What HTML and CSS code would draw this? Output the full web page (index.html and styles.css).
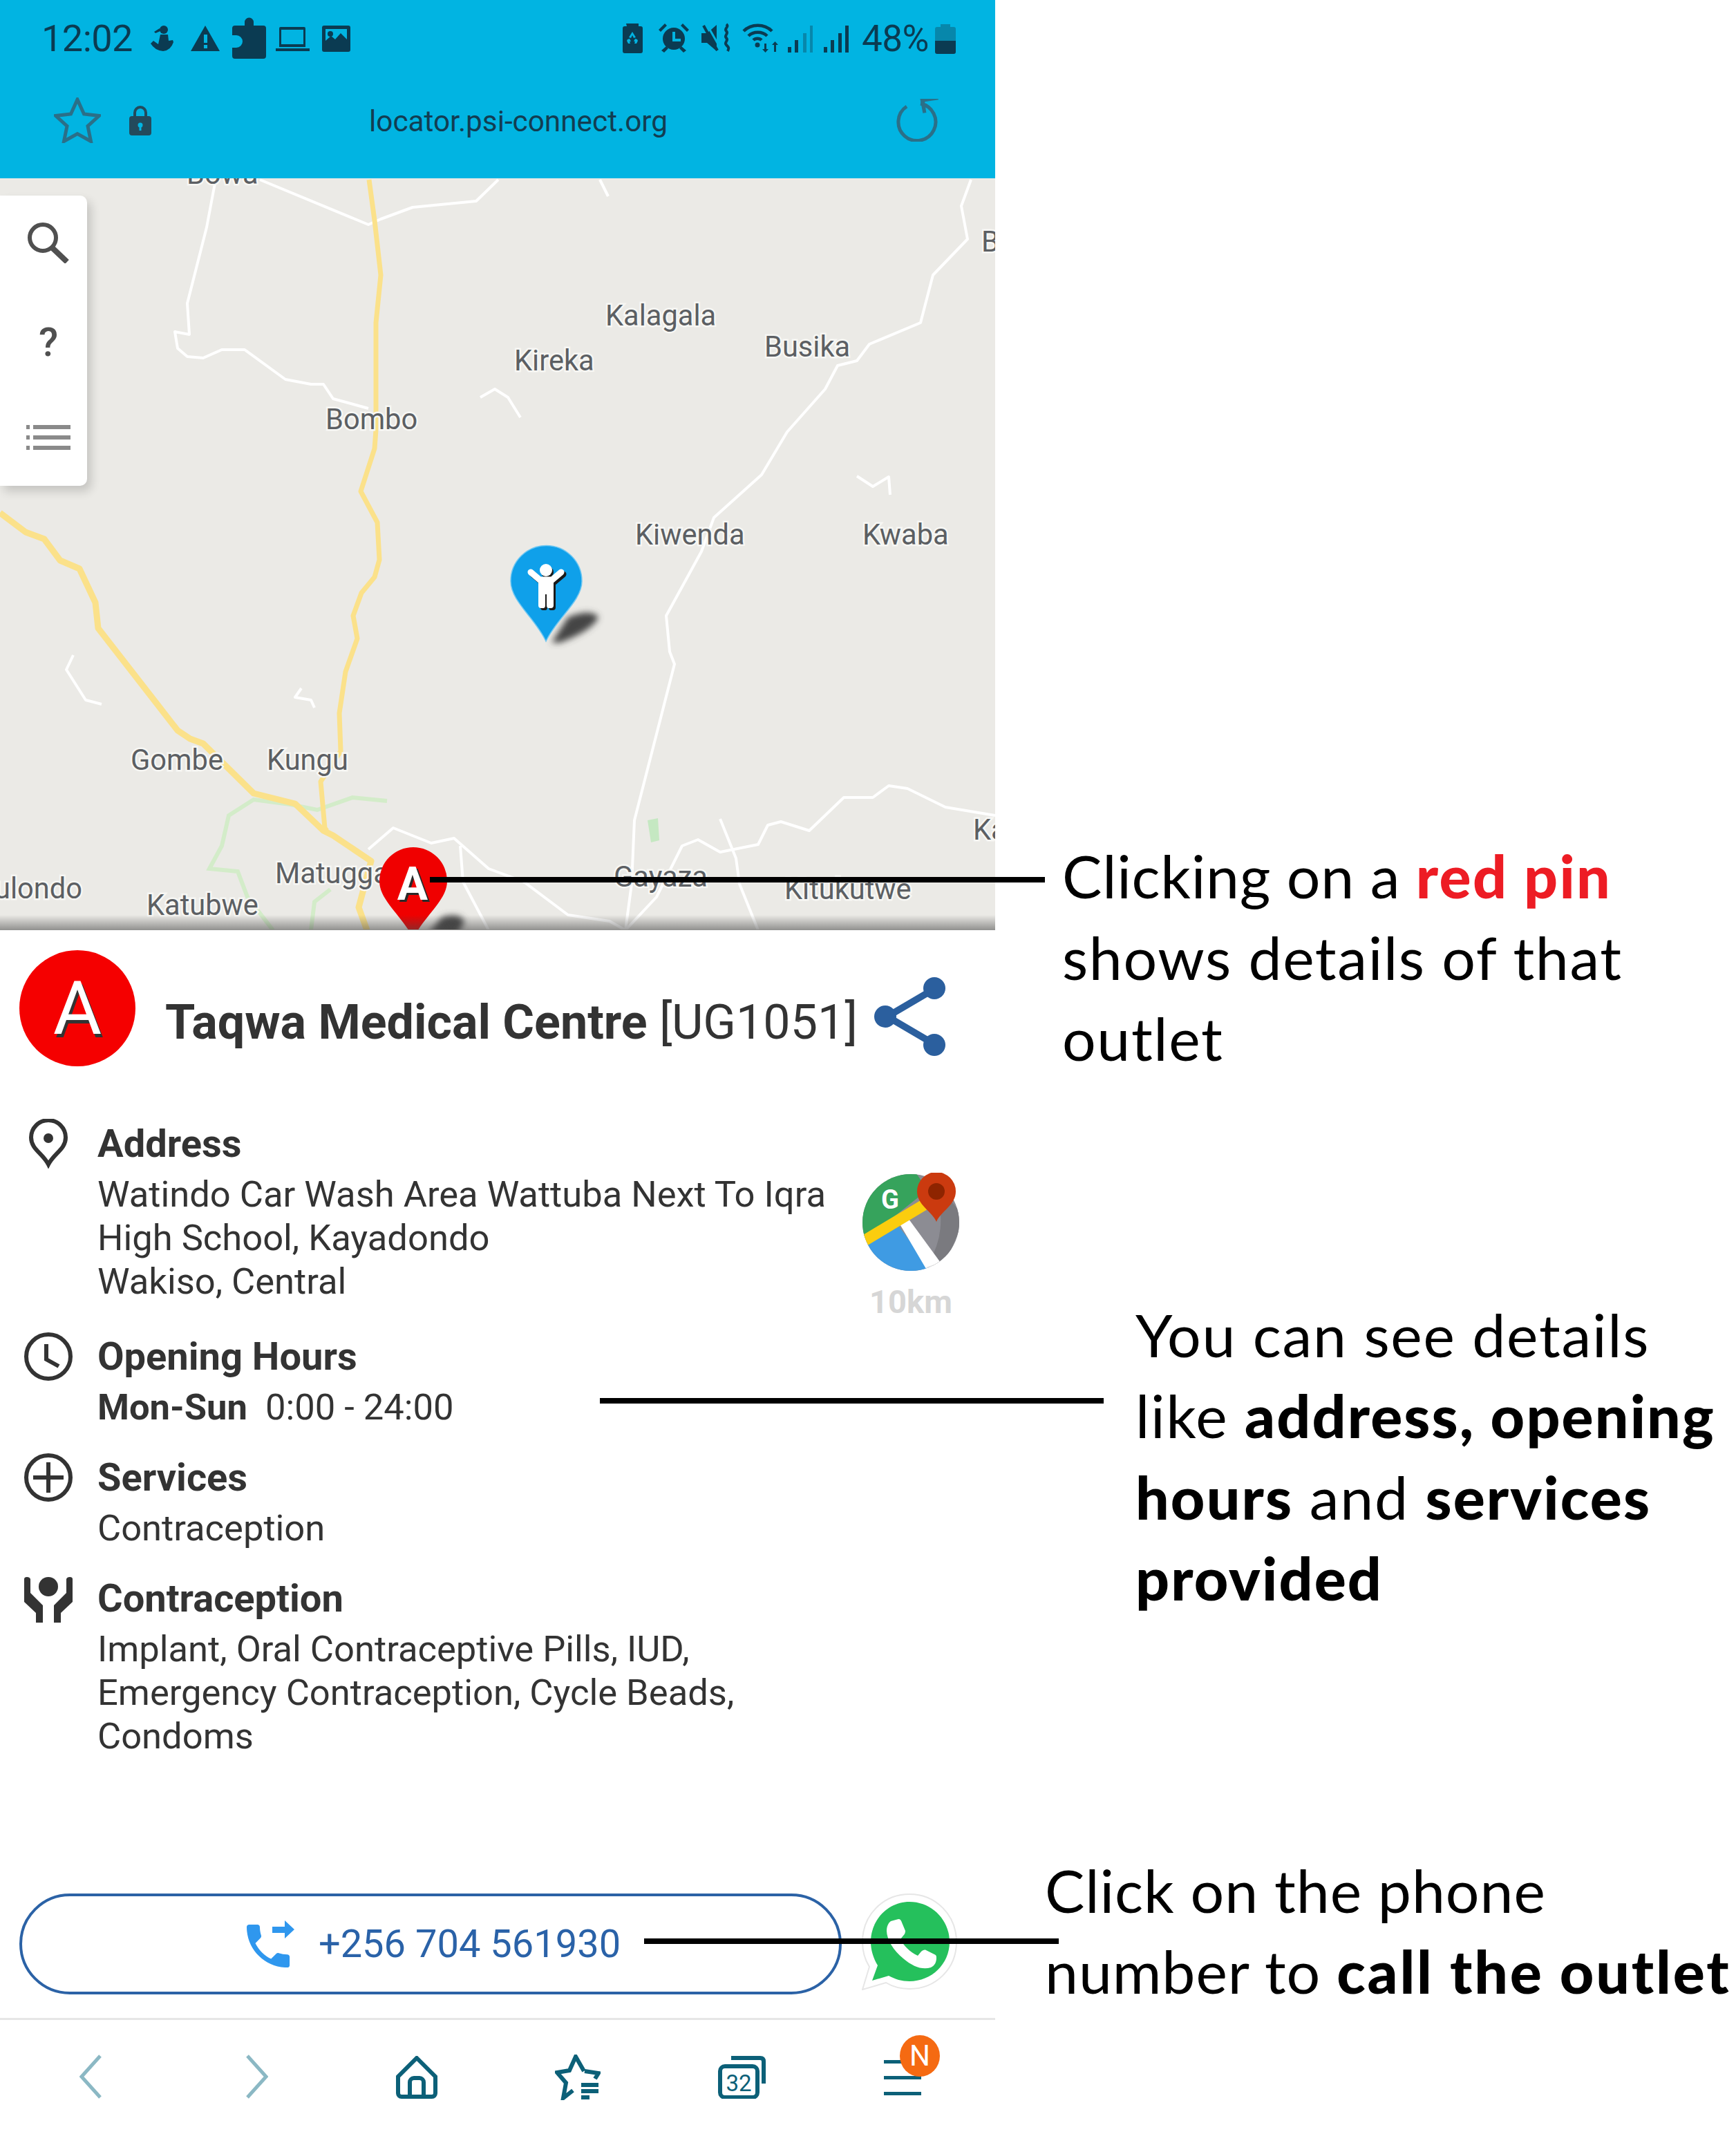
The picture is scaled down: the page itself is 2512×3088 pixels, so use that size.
FILE: index.html
```html
<!DOCTYPE html>
<html lang="en">
<head>
<meta charset="utf-8">
<title>Outlet locator</title>
<link rel="stylesheet" href="styles.css">
</head>
<body>
<main class="page">
  <section class="phone">
    <header class="browser-top">
      <div class="status">
        <span class="time">12:02</span>
        <svg class="st-left" viewBox="205 20 310 70" width="310" height="70">
          <g class="ink">
            <circle cx="237" cy="42" r="6"/>
            <path d="M231 40l-8 5 2 2 7-3zM232 49h11l1 9 6-1 1 3q-4 12-15 13-12-1-18-11l4-4 7 5z"/>
            <path d="M297 36l21 37h-42zM295 49v12h5V49zm0 15v5h5v-5z" fill-rule="evenodd"/>
            <path d="M354 36v-5a6.500 6.500 0 0 1 13 0v5h14a4 4 0 0 1 4 4v40a4 4 0 0 1-4 4h-41a4 4 0 0 1-4-4V68h6a9 9 0 0 0 0-18h-6V40a4 4 0 0 1 4-4z"/>
            <path d="M406 38h34a2 2 0 0 1 2 2v27h-38V40a2 2 0 0 1 2-2zm1 4v21h32V42zM399 69h49v4h-49z" fill-rule="evenodd"/>
            <path d="M469 36h35a3 3 0 0 1 3 3v32a3 3 0 0 1-3 3h-35a3 3 0 0 1-3-3V39a3 3 0 0 1 3-3zm2 5v17l8-7 6 5 8-9 9 9V41z" fill-rule="evenodd"/>
            <circle cx="478" cy="48" r="4"/>
          </g>
        </svg>
        <svg class="st-right" viewBox="895 20 340 70" width="340" height="70">
          <g class="ink">
            <path d="M906 33h18v4h3a3 3 0 0 1 3 3v33a3 3 0 0 1-3 3h-23a3 3 0 0 1-3-3V40a3 3 0 0 1 3-3h3z"/>
            <path class="hole" d="M915 45l5 8-3 1-2-4-2 4-3-1zM908 56l3-1 2 4h-2l1 3h-3l-2-4zM922 56l-3-1-2 4h2l-1 3h3l2-4z"/>
            <circle cx="975" cy="55" r="16"/>
            <path d="M953 42l9-9 3 3-9 9zM997 42l-9-9-3 3 9 9zM957 72l7-6 3 3-6 6zM993 72l-7-6-3 3 6 6z"/>
            <path class="hole" d="M973 45h4v10h8v4h-12z"/>
            <path d="M1015 47h8l14-12v38l-14-12h-8z"/>
            <path class="slash-gap" d="M1022 33l20 35"/>
            <path class="slash" d="M1018 36l20 36"/>
            <path class="wave" d="M1051 34c5 4-4 6 0 10s-4 6 0 10-4 6 0 10 4 5 2 9"/>
            <path class="arc" d="M1076 44c11-11 30-11 41 0M1083 51c7-7 20-7 27 0M1090 57c3-3 9-3 12 0"/>
            <circle cx="1096" cy="64" r="3.500"/>
            <path d="M1106 62h3v8h3l-4.500 5-4.500-5h3zM1123 74h-3v-10h-3l4.500-5 4.500 5h-3z"/>
            <path d="M1140 67h5v8h-5zM1150 57h5v18h-5z"/>
            <path class="faded" d="M1162 47h5v28h-5zM1172 36h4v39h-4z"/>
            <path d="M1192 67h5v8h-5zM1202 57h5v18h-5zM1213 47h5v28h-5zM1223 36h5v39h-5z"/>
          </g>
        </svg>
        <span class="pct">48%</span>
        <svg class="st-batt" viewBox="0 0 30 43" width="30" height="43">
          <path class="faded" d="M8 0h14v4h5a3 3 0 0 1 3 3v17H0V7a3 3 0 0 1 3-3h5z"/>
          <path class="ink" d="M0 24h30v16a3 3 0 0 1-3 3H3a3 3 0 0 1-3-3z"/>
        </svg>
      </div>
      <div class="urlbar">
        <svg class="u-star" viewBox="0 0 68 66" width="68" height="66">
          <path d="M34 3l9.500 21 22 2.500-16.500 15 4.500 22L34 52.500 14.500 63.500l4.500-22-16.500-15 22-2.500z"/>
        </svg>
        <svg class="u-lock" viewBox="0 0 32 44" width="32" height="44">
          <path d="M8 18v-7a8 8 0 0 1 16 0v7" fill="none" stroke="#234a5c" stroke-width="4"/>
          <rect y="16" width="32" height="28" rx="4" fill="#234a5c"/>
          <circle cx="16" cy="29" r="3.500" fill="#01b4e2"/>
          <rect x="14.500" y="29" width="3" height="8" fill="#01b4e2"/>
        </svg>
        <span class="url">locator.psi-connect.org</span>
        <svg class="u-reload" viewBox="0 0 64 62" width="64" height="62">
          <path d="M36 7a27 27 0 1 1-20 4" fill="none" stroke="#2b6f88" stroke-width="5"/>
          <path d="M36 0h26v5H42v16h-5z" fill="#2b6f88" transform="rotate(-8 36 4)"/>
        </svg>
      </div>
    </header>

    <section class="map">
      <svg class="map-art" viewBox="0 258 1440 1087" width="1440" height="1087">
        <defs>
          <filter id="soft" x="-40%" y="-40%" width="180%" height="180%"><feGaussianBlur stdDeviation="5"/></filter>
        </defs>
        <g class="green">
          <path d="M560 1159L510 1154 459 1172 420 1164 367 1157 331 1180 321 1224 303 1257 344 1261 358 1298 395 1346"/>
          <path d="M478 1287L455 1305 450 1346"/>
          <path d="M937 1187l15-3 2 32-12 3z" class="green-fill"/>
        </g>
        <g class="road-w">
          <path d="M312 260L299 329 271 439 274 484 253 480 257 504 271 516 294 518 321 506 354 506 413 549 450 556 468 556 482 577 533 591"/>
          <path d="M376 260L533 325 551 317 597 300 689 291 721 260"/>
          <path d="M868 260L880 284"/>
          <path d="M1405 260L1391 298 1400 346 1350 398 1332 467 1258 498 1240 522 1212 529 1194 563 1139 625 1102 687 1033 749 1015 798 964 891 969 943 976 961 918 1187 914 1279 905 1346"/>
          <path d="M695 575L716 563 735 575 753 604"/>
          <path d="M1240 689L1263 704 1286 690 1288 716"/>
          <path d="M106 948L96 969 124 1013 147 1019"/>
          <path d="M436 996L427 1009 450 1013 455 1024"/>
          <path d="M1440 1180L1368 1168 1313 1141 1286 1137 1263 1154 1221 1154 1171 1202 1130 1189 1111 1194 1097 1222 1042 1233 1010 1215 987 1224 950 1298 905 1346"/>
          <path d="M1042 1185L1065 1242 1070 1279 1097 1346"/>
          <path d="M533 1229L569 1198 624 1220 657 1213 707 1257 758 1276 822 1324 882 1333 905 1346"/>
          <path d="M666 1224L670 1276 707 1346"/>
        </g>
        <g class="road-y">
          <path d="M534 260L542 319 551 398 544 467 544 622 542 649 522 711 546 756 549 810 542 835 523 858 511 891 517 924 500 972 491 1032 493 1087 464 1131 470 1198 473 1202"/>
          <path class="wide" d="M0 742L37 770 64 780 87 811 115 823 138 872 142 909 257 1057 275 1069 294 1076 367 1148 427 1163 468 1202 482 1209 537 1246 519 1313 531 1346"/>
        </g>
        <g class="labels">
          <text x="270" y="266">Bowa</text>
          <text x="1420" y="364">B</text>
          <text x="876" y="471">Kalagala</text>
          <text x="744" y="536">Kireka</text>
          <text x="1106" y="516">Busika</text>
          <text x="471" y="621">Bombo</text>
          <text x="919" y="788">Kiwenda</text>
          <text x="1248" y="788">Kwaba</text>
          <text x="189" y="1114">Gombe</text>
          <text x="386" y="1114">Kungu</text>
          <text x="398" y="1278">Matugga</text>
          <text x="-8" y="1300">ulondo</text>
          <text x="212" y="1324">Katubwe</text>
          <text x="888" y="1283">Gayaza</text>
          <text x="1135" y="1301">Kitukutwe</text>
          <text x="1408" y="1215">Ka</text>
        </g>
        <path class="pin-shadow" d="M798 930L822 893Q855 880 866 893 858 912 810 930z" filter="url(#soft)"/>
        <path class="pin-blue" d="M790 928C775 895 739 870 739 841A51.500 51.500 0 1 1 842 841C842 870 805 895 790 928Z"/>
        <g class="person person-shade">
          <circle cx="792" cy="828" r="9"/>
          <path class="arm" d="M771 831l13 11h18l13-11"/>
          <path d="M782 841h22v38q0 4-4 4h-3q-3 0-3-4v-16h-2v16q0 4-3 4h-3q-4 0-4-4z"/>
        </g>
        <g class="person">
          <circle cx="790" cy="825" r="9"/>
          <path class="arm" d="M768 828l13 11h18l13-11"/>
          <path d="M779 838h22v38q0 4-4 4h-3q-3 0-3-4v-16h-2v16q0 4-3 4h-3q-4 0-4-4z"/>
        </g>
        <path class="pin-shadow" d="M620 1350L640 1327Q668 1320 672 1335L660 1355z" filter="url(#soft)"/>
        <path class="pin-red" d="M598 1358C582 1325 549 1303 549 1275A49 49 0 1 1 647 1275C647 1303 614 1325 598 1358Z"/>
        <text class="pin-letter shade" x="600" y="1305">A</text>
        <text class="pin-letter" x="597" y="1302">A</text>
      </svg>
      <div class="map-fade"></div>
      <nav class="tools">
        <svg viewBox="0 0 64 60" width="64" height="60"><circle cx="24" cy="23" r="19" fill="none" stroke="#505050" stroke-width="6"/><path d="M37 37l22 21" stroke="#505050" stroke-width="8"/></svg>
        <span class="tool-help">?</span>
        <svg viewBox="0 0 64 36" width="64" height="36"><path d="M0 0h5v6H0zM0 15h5v6H0zM0 30h5v6H0zM10 0h54v6H10zM10 15h54v6H10zM10 30h54v6H10z" fill="#8a8a8a"/></svg>
      </nav>
    </section>

    <section class="details">
      <div class="head">
        <div class="badge">A</div>
        <h1 class="title"><b>Taqwa Medical Centre</b> [UG1051]</h1>
        <svg class="share" viewBox="0 0 108 116" width="108" height="116">
          <path d="M88 18L20 58l68 40" fill="none" stroke="#2b5f9e" stroke-width="10"/>
          <circle cx="88" cy="17" r="16" fill="#2b5f9e"/><circle cx="17" cy="58" r="16" fill="#2b5f9e"/><circle cx="88" cy="99" r="16" fill="#2b5f9e"/>
        </svg>
      </div>

      <div class="row row-address">
        <svg class="ico" viewBox="0 0 72 72" width="72" height="72"><path class="ln" d="M36 66C28 50 11 44 11 27a25 25 0 0 1 50 0C61 44 44 50 36 66Z"/><circle class="fl" cx="36" cy="28" r="7"/></svg>
        <div class="col">
          <h2 class="label">Address</h2>
          <p class="body">Watindo Car Wash Area Wattuba Next To Iqra<br>High School, Kayadondo<br>Wakiso, Central</p>
        </div>
        <div class="route">
          <svg viewBox="1245 1695 142 144" width="142" height="144">
            <defs><clipPath id="disc"><circle cx="1316" cy="1767" r="70"/></clipPath></defs>
            <g clip-path="url(#disc)">
              <rect x="1240" y="1690" width="150" height="150" fill="#8c8c93"/>
              <path d="M1345 1700L1394 1760 1360 1840 1342 1825Q1375 1770 1345 1700Z" fill="#7a7a7f"/>
              <path d="M1240 1800L1340 1720 1320 1690H1240Z" fill="#36a35c"/>
              <path d="M1240 1800L1298 1772 1350 1840H1240Z" fill="#3f9be3"/>
              <path d="M1298 1766l12-8 49 67-18 14z" fill="#fff"/>
              <path d="M1338 1832l20-7 5 6-16 10z" fill="#dedede"/>
              <path d="M1240 1789L1335 1732 1345 1745 1245 1805Z" fill="#fbcd0e"/>
            </g>
            <text class="g" x="1286" y="1747">G</text>
            <path d="M1353 1766C1346 1750 1325 1742 1325 1722A28 28 0 0 1 1381 1722C1381 1742 1360 1750 1353 1766Z" fill="#cb3a0f"/>
            <circle cx="1353" cy="1722" r="12" fill="#8e2400"/>
          </svg>
          <span class="km">10km</span>
        </div>
      </div>

      <div class="row">
        <svg class="ico" viewBox="0 0 72 72" width="72" height="72"><circle class="ln" cx="36" cy="36" r="32"/><path class="ln" d="M33 18v22l18 10"/></svg>
        <div class="col">
          <h2 class="label">Opening Hours</h2>
          <p class="body"><b class="strong">Mon-Sun</b>&nbsp; 0:00 - 24:00</p>
        </div>
      </div>

      <div class="row">
        <svg class="ico" viewBox="0 0 72 72" width="72" height="72"><circle class="ln" cx="36" cy="36" r="32"/><path class="ln" d="M36 14v44M14 36h44"/></svg>
        <div class="col">
          <h2 class="label">Services</h2>
          <p class="body">Contraception</p>
        </div>
      </div>

      <div class="row">
        <svg class="ico" viewBox="0 0 72 72" width="72" height="72">
          <ellipse class="fl" cx="36" cy="19" rx="14" ry="14"/>
          <path class="fl" d="M1 8q0-3 4-3t5 3v20l18 18v25H18V57L1 41z"/>
          <path class="fl" d="M71 8q0-3-4-3t-5 3v20L44 46v25h10V57l17-16z"/>
        </svg>
        <div class="col">
          <h2 class="label">Contraception</h2>
          <p class="body">Implant, Oral Contraceptive Pills, IUD,<br>Emergency Contraception, Cycle Beads,<br>Condoms</p>
        </div>
      </div>

      <div class="actions">
        <a class="call">
          <svg viewBox="0 0 70 68" width="70" height="68">
            <path transform="translate(-10.350 -4.350) scale(3.450)" d="M6.620 10.790c1.440 2.830 3.760 5.140 6.590 6.590l2.200-2.200c.27-.27.67-.36 1.020-.24 1.120.37 2.330.57 3.570.57.55 0 1 .45 1 1V20c0 .55-.45 1-1 1-9.390 0-17-7.610-17-17 0-.55.45-1 1-1h3.500c.55 0 1 .45 1 1 0 1.250.2 2.450.57 3.570.11.35.03.74-.25 1.020l-2.200 2.200z" fill="#2f97ee"/>
            <path d="M37 9h18V0l14 13-14 13v-8H37z" fill="#2f97ee"/>
          </svg>
          <span class="phone-no">+256 704 561930</span>
        </a>
        <svg class="wa" viewBox="0 0 138 140" width="138" height="140">
          <path d="M69 1c38 0 68 30 68 69s-30 68-68 68c-12 0-24-3-34-9L1 139l10-33C4 95 1 83 1 70 1 31 31 1 69 1Z" fill="#fff" stroke="#e6e6e6" stroke-width="2"/>
          <path d="M69 12c32 0 58 26 58 58s-26 57-58 57c-11 0-21-3-30-8l-24 7 8-22c-6-10-10-22-10-34 0-32 25-58 56-58Z" fill="#25c05c"/>
          <path d="M42 40l11-3c3 0 4 2 5 5l5 12c0 3-1 5-3 7l-4 5c5 10 13 18 25 24l5-6c2-2 5-3 7-2l12 6c3 1 3 3 3 5 0 6-2 11-8 14-12 4-26-1-40-13C46 83 36 66 36 54c0-6 2-11 6-14Z" fill="#fff"/>
        </svg>
      </div>
    </section>

    <nav class="bottom">
      <svg class="n-back" viewBox="0 0 32 64" width="32" height="64"><path d="M30 2L3 32l27 30" class="n-faint"/></svg>
      <svg class="n-fwd" viewBox="0 0 32 64" width="32" height="64"><path d="M2 2l27 30L2 62" class="n-faint"/></svg>
      <svg class="n-home" viewBox="0 0 60 62" width="60" height="62"><path class="n-ink" d="M30 3L57 30v24a5 5 0 0 1-5 5H8a5 5 0 0 1-5-5V30zM20 58V38a6 6 0 0 1 6-6h8a6 6 0 0 1 6 6v20"/></svg>
      <svg class="n-star" viewBox="0 0 66 66" width="66" height="66"><path class="n-ink" d="M42 24L30 3 21 23 3 26l13 15-4 22 14-11"/><path class="n-ink" d="M43 24l20 3-5 8M38 44h25M38 53h25M38 62h12"/></svg>
      <svg class="n-tabs" viewBox="0 0 70 62" width="70" height="62">
        <path class="n-ink" d="M19 3h42q5 0 5 5v32"/>
        <rect class="n-ink" x="3" y="15" width="54" height="45" rx="7"/>
        <text class="tabs-no" x="30" y="51">32</text>
      </svg>
      <div class="n-menu">
        <span class="bar"></span><span class="bar"></span><span class="bar"></span>
        <span class="dot">N</span>
      </div>
    </nav>
  </section>

  <aside class="notes">
    <p class="note note-one"><span class="tight">Clicking on a </span><b class="red">red pin</b><br>shows details of that<br>outlet</p>
    <p class="note note-two">You can see details<br>like <b>address, opening</b><br><b>hours</b> and <b>services</b><br><b>provided</b></p>
    <p class="note note-three">Click on the phone<br>number to <b>call the outlet</b></p>
  </aside>

  <i class="rule rule-one"></i>
  <i class="rule rule-two"></i>
  <i class="rule rule-three"></i>
</main>
</body>
</html>
```

FILE: styles.css
```css
* { box-sizing: border-box; }
html, body { margin: 0; padding: 0; background: #fff; }
.page {
  position: relative;
  display: flex;
  width: 2512px;
  height: 3088px;
  overflow: hidden;
  font-family: Roboto, "Liberation Sans", sans-serif;
  color: #333;
}
.phone { display: flex; flex-direction: column; width: 1440px; height: 3088px; flex: none; }

/* top bar */
.browser-top { height: 258px; background: #01b4e2; color: #0b3b52; flex: none; }
.status { display: flex; align-items: center; height: 112px; padding-left: 60px; }
.time { font-size: 54px; line-height: 60px; width: 130px; letter-spacing: -.5px; }
.st-left { margin-left: 15px; flex: none; }
.st-right { margin-left: 380px; flex: none; }
.pct { margin-left: 12px; width: 106px; font-size: 53px; line-height: 60px; letter-spacing: -.5px; }
.st-batt { flex: none; margin-top: 1px; }
.ink { fill: #0b3b52; }
.hole { fill: #01b4e2; }
.faded { fill: #0787ab; }
.wave { fill: none; stroke: #0b3b52; stroke-width: 4; }
.arc { fill: none; stroke: #0b3b52; stroke-width: 4.5; }
.slash { fill: none; stroke: #0b3b52; stroke-width: 4; }
.slash-gap { fill: none; stroke: #01b4e2; stroke-width: 3; }
.urlbar { display: flex; align-items: center; height: 124px; padding-left: 78px; }
.u-star { flex: none; fill: none; stroke: #2b6f88; stroke-width: 5; }
.u-lock { flex: none; margin-left: 41px; }
.url { margin: 4px 0 0 315px; font-size: 42.300px; line-height: 50px; color: #123d52; white-space: nowrap; }
.u-reload { flex: none; margin-left: auto; margin-right: 80px; }

/* map */
.map { position: relative; height: 1088px; flex: none; background: #ebeae6; overflow: hidden; }
.map-art { display: block; }
.road-w path { fill: none; stroke: #fff; stroke-width: 4; stroke-linejoin: round; }
.road-y path { fill: none; stroke: #fbe18a; stroke-width: 7; stroke-linejoin: round; }
.road-y .wide { stroke-width: 9; }
.green path { fill: none; stroke: #d3ecc9; stroke-width: 6; }
.green .green-fill { fill: #c5e8c2; stroke: none; }
.labels text {
  font-family: Roboto, sans-serif;
  font-size: 41.600px;
  fill: #5c5f63;
  stroke: #f7f7f4;
  stroke-width: 5px;
  paint-order: stroke;
}
.pin-shadow { fill: #444; }
.pin-blue { fill: #0fa0ea; stroke: #6fc7f2; stroke-width: 1.500; }
.pin-red { fill: #f00000; }
.person { fill: #fff; }
.person .arm { fill: none; stroke: #fff; stroke-width: 9; stroke-linecap: round; }
.person-shade { fill: #1a1a1a; }
.person-shade .arm { stroke: #1a1a1a; }
.pin-letter { font-family: Roboto, sans-serif; font-weight: 700; font-size: 66px; fill: #fff; text-anchor: middle; }
.pin-letter.shade { fill: #2a2a2a; }
.map-fade {
  position: absolute;
  left: 0; right: 0; bottom: 0;
  height: 22px;
  background: linear-gradient(to bottom, rgba(70,70,70,0), rgba(70,70,70,.55));
}
.tools {
  position: absolute;
  left: 0; top: 25px;
  width: 126px; height: 420px;
  background: #fff;
  border-radius: 0 10px 10px 0;
  box-shadow: 6px 8px 14px rgba(0,0,0,.16);
  display: flex;
  flex-direction: column;
  align-items: flex-start;
  padding: 38px 0 0 38px;
}
.tool-help { margin: 84px 0 0 18px; font-size: 58px; line-height: 60px; font-weight: 500; color: #505050; }
.tools svg:last-child { margin-top: 90px; }

/* details */
.details { display: flex; flex-direction: column; flex: 1; padding-top: 29px; }
.head { display: flex; align-items: center; height: 168px; padding-left: 28px; }
.badge {
  width: 168px; height: 168px; flex: none;
  border-radius: 50%;
  background: #f50000;
  color: #fff;
  font-size: 108px;
  line-height: 168px;
  text-align: center;
  text-shadow: 3px 5px 0 #333;
}
.title {
  margin: 40px 0 0 43px;
  font-size: 70px;
  line-height: 80px;
  font-weight: 400;
  white-space: nowrap;
}
.title b { font-weight: 700; }
.share { flex: none; margin: 24px 0 0 23px; }

.row { display: flex; padding-left: 34px; margin-top: 34px; }
.row-address { margin-top: 76px; height: 274px; }
.ico { flex: none; }
.ln { fill: none; stroke: #333; stroke-width: 6; }
.fl { fill: #333; }
.col { margin-left: 35px; flex: none; }
.label { margin: 0 0 6px; font-size: 56px; line-height: 72px; font-weight: 700; }
.body { margin: 0; font-size: 52.500px; line-height: 63px; color: #333; white-space: nowrap; }
.strong { font-weight: 700; }
.route { margin-left: 52px; margin-top: 78px; align-self: flex-start; display: flex; flex-direction: column; align-items: center; width: 142px; flex: none; }
.route svg { display: block; flex: none; }
.g { font-family: Roboto, sans-serif; font-weight: 700; font-size: 38px; fill: #fff; text-anchor: middle; }
.km { margin-top: 15px; font-size: 47px; line-height: 56px; font-weight: 700; color: #d6d6d6; }

.actions { display: flex; align-items: flex-start; margin-top: auto; margin-bottom: 34px; padding-left: 28px; }
.call {
  display: flex;
  align-items: center;
  justify-content: center;
  gap: 34px;
  width: 1190px; height: 146px;
  padding-left: 9px;
  border: 4px solid #2b62a6;
  border-radius: 73px;
  flex: none;
}
.phone-no { font-size: 56px; line-height: 64px; color: #2a62a8; }
.wa { flex: none; margin-left: 29px; }

/* bottom bar */
.bottom { position: relative; display: flex; align-items: flex-start; height: 168px; flex: none; border-top: 3px solid #e6e6e6; padding-top: 50px; }
.bottom svg { flex: none; }
.n-faint { fill: none; stroke: #8bb8c4; stroke-width: 5; }
.n-ink { fill: none; stroke: #0c6078; stroke-width: 6; }
.tabs-no { font-family: Roboto, sans-serif; font-size: 33px; fill: #0c6078; text-anchor: middle; }
.n-back { margin-left: 115px; }
.n-fwd { margin-left: 209px; }
.n-home { margin-left: 185px; margin-top: 2px; }
.n-star { margin-left: 170px; }
.n-tabs { margin-left: 170px; margin-top: 2px; }
.n-menu { position: relative; display: flex; flex-direction: column; gap: 18px; width: 54px; margin: 8px 0 0 170px; }
.bar { display: block; height: 5px; background: #0c6078; }
.dot {
  position: absolute;
  left: 23px; top: -36px;
  width: 58px; height: 60px;
  border-radius: 50%;
  background: #f56a12;
  color: #fff;
  font-size: 42px;
  line-height: 60px;
  text-align: center;
}

/* annotations */
.notes { flex: 1; font-family: Lato, "Open Sans", sans-serif; color: #000; }
.note { margin: 0; font-size: 86px; line-height: 117.500px; white-space: nowrap; }
.note b { font-weight: 900; }
.note-one { margin-top: 1208px; margin-left: 97px; letter-spacing: 1.600px; }
.note-one .tight { letter-spacing: .700px; }
.note-one .red { color: #ed1c24; letter-spacing: 2.300px; }
.note-two { margin-top: 311px; margin-left: 203px; letter-spacing: 1.700px; }
.note-two b { letter-spacing: 2.100px; }
.note-three { margin-top: 334px; margin-left: 72px; letter-spacing: .900px; }
.note-three b { letter-spacing: 2.800px; }

.rule { position: absolute; display: block; background: #000; height: 8px; }
.rule-one { left: 622px; top: 1269px; width: 890px; }
.rule-two { left: 868px; top: 2023px; width: 729px; }
.rule-three { left: 932px; top: 2805px; width: 600px; }
```
